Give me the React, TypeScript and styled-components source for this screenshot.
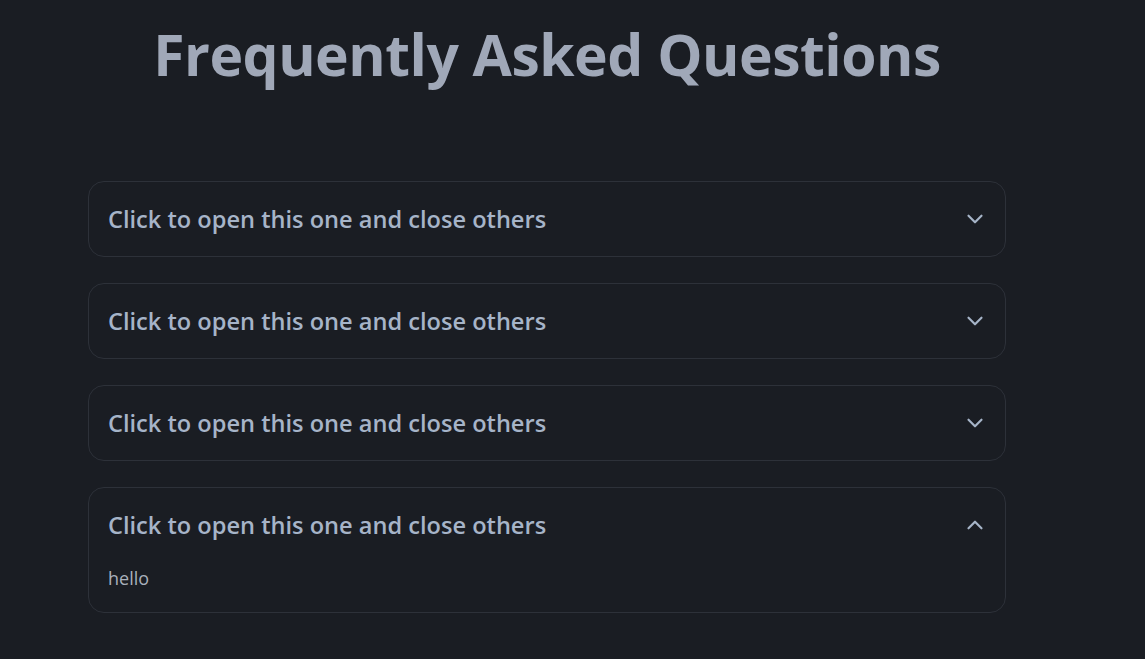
import React, { useState } from "react";
import styled, { createGlobalStyle } from "styled-components";
import { ChevronDown, ChevronUp } from "lucide-react";

const GlobalStyle = createGlobalStyle`
  html, body {
    margin: 0;
    padding: 0;
    background-color: #1a1d23;
  }
  body {
    font-family: "Open Sans", "Noto Sans", sans-serif;
    color: #a0aec0;
  }
`;

const StyledPage = styled.main`
  min-height: 659px;
  padding: 0 0 0 88px;
  box-sizing: border-box;
`;

const StyledContainer = styled.section`
  width: 918px;
`;

const StyledTitle = styled.h1`
  margin: 0;
  padding-top: 16px;
  height: 180.5px;
  box-sizing: border-box;
  text-align: center;
  font-size: 57px;
  line-height: 76px;
  font-weight: 700;
  letter-spacing: -0.5px;
  color: #a0a8b8;
`;

const StyledList = styled.div`
  display: flex;
  flex-direction: column;
  gap: 26px;
`;

const StyledItem = styled.article`
  border: 1px solid #2d3139;
  border-radius: 16px;
  background-color: #1a1d23;
`;

const StyledQuestion = styled.button`
  width: 100%;
  display: flex;
  align-items: center;
  justify-content: space-between;
  padding: 19px 17px 19px 19px;
  background: transparent;
  border: none;
  cursor: pointer;
  font-family: inherit;
  font-size: 23.6px;
  line-height: 36px;
  font-weight: 600;
  color: #a6b4c8;
  text-align: left;

  svg {
    color: #a6b4c8;
    flex-shrink: 0;
  }
`;

const StyledAnswer = styled.p`
  margin: 0;
  padding: 2px 19px 20px;
  font-size: 18px;
  line-height: 28px;
  color: #a9b0bc;
`;

const questions = [
  { q: "Click to open this one and close others", a: "hello" },
  { q: "Click to open this one and close others", a: "hello" },
  { q: "Click to open this one and close others", a: "hello" },
  { q: "Click to open this one and close others", a: "hello" },
];

const App = () => {
  const [openIndex, setOpenIndex] = useState<number | null>(3);

  return (
    <>
      <GlobalStyle />
      <StyledPage>
        <StyledContainer>
          <StyledTitle>Frequently Asked Questions</StyledTitle>
          <StyledList>
            {questions.map((item, i) => {
              const isOpen = openIndex === i;
              return (
                <StyledItem key={i}>
                  <StyledQuestion
                    onClick={() => setOpenIndex(isOpen ? null : i)}
                  >
                    {item.q}
                    {isOpen ? (
                      <ChevronUp size={26} strokeWidth={2} />
                    ) : (
                      <ChevronDown size={26} strokeWidth={2} />
                    )}
                  </StyledQuestion>
                  {isOpen && <StyledAnswer>{item.a}</StyledAnswer>}
                </StyledItem>
              );
            })}
          </StyledList>
        </StyledContainer>
      </StyledPage>
    </>
  );
};

export default App;
